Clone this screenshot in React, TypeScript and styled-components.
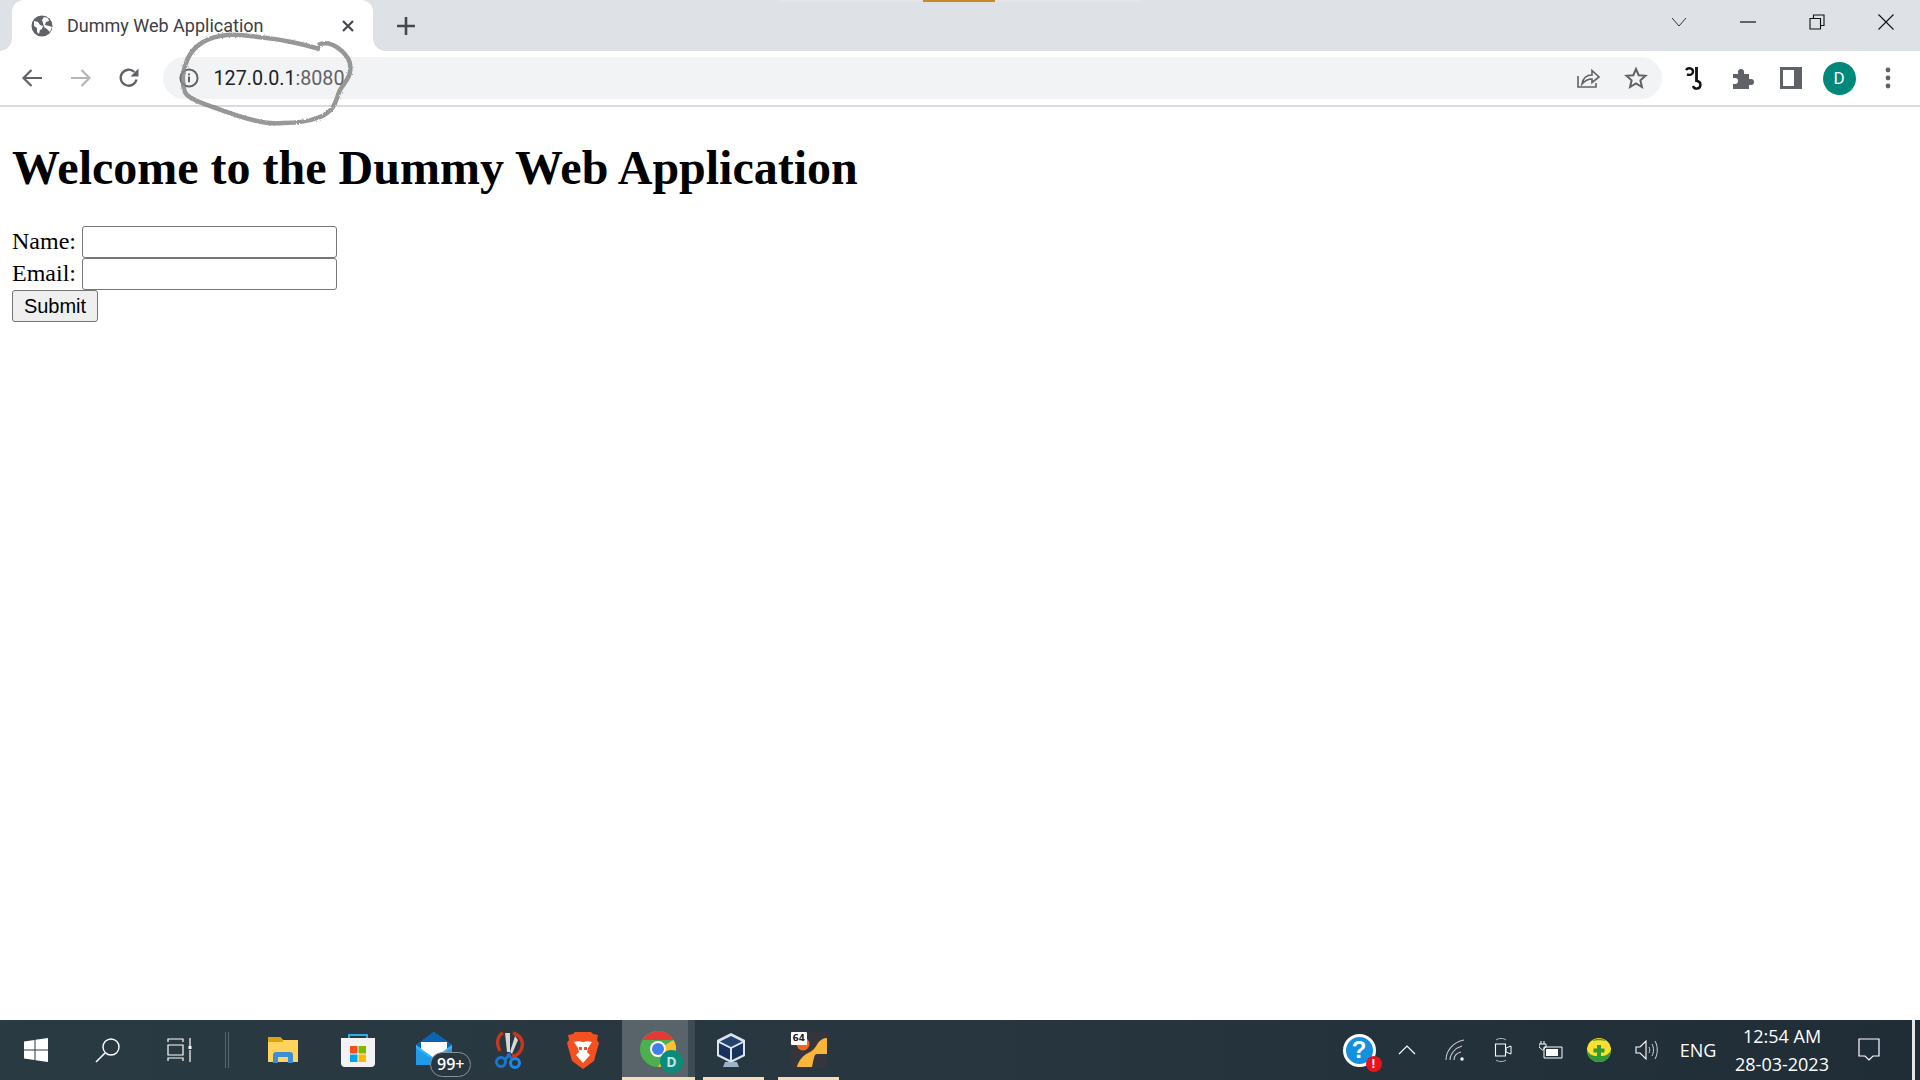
import { FC, ReactNode } from "react";
import styled, { createGlobalStyle } from "styled-components";

const GlobalStyle = createGlobalStyle`
  html, body {
    margin: 0;
    padding: 0;
    height: 100%;
    overflow: hidden;
    background: #fff;
  }
  #root {
    height: 100%;
  }
`;

const ICON_GREY = "#5f6368";

const App: FC = () => {
  return (
    <Screen>
      <GlobalStyle />
      <TabStrip>
        <LoadBar>
          <LoadProgress />
        </LoadBar>
        <Tab>
          <svg width="24" height="24" viewBox="0 0 24 24">
            <circle cx="12" cy="12" r="10.5" fill={ICON_GREY} />
            <path d="M4 7l4 1 2 3 3 1-1 3-2 1-1 4-2-2v-4l-3-2zM14 3l4 1 1 3-3 1-1 3 4 1 3 1-2 5-3-3-3-2-1-4-1-3z" fill="#fff" />
          </svg>
          <TabTitle>Dummy Web Application</TabTitle>
          <svg width="14" height="14" viewBox="0 0 14 14">
            <path d="M2 2l10 10M12 2L2 12" stroke="#45484d" strokeWidth="2.2" />
          </svg>
        </Tab>
        <NewTab>
          <svg width="20" height="20" viewBox="0 0 20 20">
            <path d="M10 1v18M1 10h18" stroke="#45484d" strokeWidth="2.6" />
          </svg>
        </NewTab>
        <StripSpacer />
        <WindowButton $width={69}>
          <svg width="18" height="12" viewBox="0 0 18 12">
            <path d="M2 2l7 8 7-8" stroke="#333" strokeWidth="1" fill="none" />
          </svg>
        </WindowButton>
        <WindowButton $width={69}>
          <svg width="16" height="2" viewBox="0 0 16 2">
            <path d="M0 1h16" stroke="#111" strokeWidth="1.2" />
          </svg>
        </WindowButton>
        <WindowButton $width={69}>
          <svg width="16" height="16" viewBox="0 0 16 16">
            <path d="M1 4.5h10.5V15H1zM4.5 4.5V1H15v10.5h-3.5" stroke="#111" strokeWidth="1.1" fill="none" />
          </svg>
        </WindowButton>
        <WindowButton $width={69}>
          <svg width="16" height="16" viewBox="0 0 16 16">
            <path d="M.5.5l15 15M15.5.5l-15 15" stroke="#111" strokeWidth="1.1" />
          </svg>
        </WindowButton>
      </TabStrip>

      <Toolbar>
        <NavButton>
          <svg width="22" height="20" viewBox="0 0 22 20">
            <path d="M21 10H3M10.5 2L2.5 10l8 8" stroke={ICON_GREY} strokeWidth="2.2" fill="none" />
          </svg>
        </NavButton>
        <NavButton>
          <svg width="22" height="20" viewBox="0 0 22 20">
            <path d="M1 10h18M11.5 2l8 8-8 8" stroke="#b4b6b9" strokeWidth="2.2" fill="none" />
          </svg>
        </NavButton>
        <NavButton>
          <svg width="22" height="22" viewBox="0 0 22 22">
            <path d="M18.5 12.5A8 8 0 1 1 16.3 5" stroke={ICON_GREY} strokeWidth="2.3" fill="none" />
            <path d="M20.5 1.5v8h-8z" fill={ICON_GREY} />
          </svg>
        </NavButton>
        <Omnibox>
          <svg width="20" height="20" viewBox="0 0 20 20">
            <circle cx="10" cy="10" r="8.6" stroke={ICON_GREY} strokeWidth="2" fill="none" />
            <path d="M10 8.6v5.6M10 5.4v1.8" stroke={ICON_GREY} strokeWidth="2" />
          </svg>
          <Url>
            127.0.0.1<UrlPort>:8080</UrlPort>
          </Url>
          <OmniSpacer />
          <OmniIcon>
            <svg width="24" height="22" viewBox="0 0 24 22">
              <path d="M2 9v11h18v-4" stroke={ICON_GREY} strokeWidth="1.6" fill="none" />
              <path d="M6 17c1-6 5-9 10-9V3.5l7 6.5-7 5.5V12c-4 0-7 1.5-10 5z" stroke={ICON_GREY} strokeWidth="1.6" fill="none" />
            </svg>
          </OmniIcon>
          <OmniIcon>
            <svg width="24" height="24" viewBox="0 0 24 24">
              <path d="M12 3l2.7 6.2 6.8.6-5.1 4.5 1.5 6.7L12 17.5 6.100 21l1.500-6.700L2.500 9.800l6.800-.6z" stroke={ICON_GREY} strokeWidth="2" fill="none" />
            </svg>
          </OmniIcon>
        </Omnibox>
        <ToolIcons>
          <ToolIcon>
            <svg width="22" height="24" viewBox="0 0 22 24">
              <path d="M2 4c2-3 7-2 7 1.500 0 3-3 4-6 3" stroke="#111" strokeWidth="2.4" fill="none" />
              <path d="M12.500 1v15" stroke="#111" strokeWidth="2.8" fill="none" />
              <path d="M13 15a3.800 3.800 0 1 1-4 5" stroke="#111" strokeWidth="2.400" fill="none" />
            </svg>
          </ToolIcon>
          <ToolIcon>
            <svg width="22" height="22" viewBox="0 0 22 22">
              <path d="M1 7h5V5a3 3 0 0 1 6 0v2h5v5h2a3 3 0 0 1 0 6h-2v4H1v-5h2a3 3 0 0 0 0-6H1z" fill={ICON_GREY} />
            </svg>
          </ToolIcon>
          <ToolIcon>
            <svg width="22" height="22" viewBox="0 0 22 22">
              <path d="M1.500 1.500h19v19h-19z" stroke={ICON_GREY} strokeWidth="3" fill="#fff" />
              <path d="M14 1h8v20h-8z" fill={ICON_GREY} />
            </svg>
          </ToolIcon>
          <Avatar>D</Avatar>
          <ToolIcon>
            <svg width="6" height="22" viewBox="0 0 6 22">
              <circle cx="3" cy="3" r="2.400" fill={ICON_GREY} />
              <circle cx="3" cy="11" r="2.400" fill={ICON_GREY} />
              <circle cx="3" cy="19" r="2.400" fill={ICON_GREY} />
            </svg>
          </ToolIcon>
        </ToolIcons>
        <Scribble width="180" height="100" viewBox="0 0 180 100">
          <defs>
            <filter id="pencil" x="-10%" y="-10%" width="120%" height="120%">
              <feTurbulence type="fractalNoise" baseFrequency="0.5" numOctaves="2" seed="4" />
              <feDisplacementMap in="SourceGraphic" scale="2.500" />
            </filter>
          </defs>
          <path
            d="M140 18 C 122 13, 105 9, 87 7 C 72 5, 58 3, 47 4 C 36 5, 30 7, 23 11 C 15 16, 11 21, 8 27 C 5 34, 2 42, 3 49 C 3 56, 4 61, 7 64 C 14 70, 24 73, 33 76 C 47 81, 60 86, 73 89 C 84 92, 94 93, 103 92 C 118 92, 130 90, 140 86 C 146 84, 150 80, 153 76 C 157 70, 157 65, 160 59 C 164 52, 169 48, 170 41 C 171 35, 170 30, 167 26 C 163 20, 159 17, 153 14 C 148 12, 142 12, 138 14"
            stroke="#858585"
            strokeWidth="4.500"
            strokeOpacity="0.85"
            fill="none"
            filter="url(#pencil)"
          />
        </Scribble>
      </Toolbar>

      <Page>
        <Heading>Welcome to the Dummy Web Application</Heading>
        <form>
          <FieldRow>
            <FieldLabel>Name:</FieldLabel>
            <TextInput type="text" />
          </FieldRow>
          <FieldRow>
            <FieldLabel>Email:</FieldLabel>
            <TextInput type="text" />
          </FieldRow>
          <SubmitButton type="button">Submit</SubmitButton>
        </form>
      </Page>

      <Taskbar>
        <TaskSlot $width={72}>
          <svg width="24" height="24" viewBox="0 0 24 24">
            <path d="M0 3.500l10.500-1.500v9.500H0zM11.500 1.800L24 0v11.500H11.500zM0 12.500h10.500V22L0 20.500zM11.500 12.500H24V24l-12.500-1.800z" fill="#fff" />
          </svg>
        </TaskSlot>
        <TaskSlot $width={72}>
          <svg width="26" height="26" viewBox="0 0 26 26">
            <circle cx="16" cy="10" r="8" stroke="#fff" strokeWidth="1.400" fill="none" />
            <path d="M10 16L1 25" stroke="#fff" strokeWidth="1.600" />
          </svg>
        </TaskSlot>
        <TaskSlot $width={72}>
          <svg width="26" height="24" viewBox="0 0 26 24">
            <path d="M1 4V1h15v3M1 23v-3h15v3M1 7h15v10H1z" stroke="#fff" strokeWidth="1.200" fill="none" />
            <path d="M23 0v8M23 12v12" stroke="#fff" strokeWidth="1.200" />
            <path d="M21.500 8h3v3h-3z" fill="#fff" />
          </svg>
        </TaskSlot>
        <TaskDivider />
        <TaskSlot $width={72} $left={10}>
          <svg width="32" height="28" viewBox="0 0 32 28">
            <path d="M1 1h12l3 3h15v22H1z" fill="#ffd35c" />
            <path d="M1 1h12l3 3v2H1z" fill="#dba40c" />
            <path d="M6 27v-8a3 3 0 0 1 3-3h14a3 3 0 0 1 3 3v8h-5v-6H11v6z" fill="#3a8ed6" />
          </svg>
        </TaskSlot>
        <TaskSlot $width={72} $left={3}>
          <svg width="36" height="34" viewBox="0 0 36 34">
            <path d="M9 8V2h18v6" stroke="#2ab0e8" strokeWidth="2" fill="none" />
            <path d="M1 5h34v25a4 4 0 0 1-4 4H5a4 4 0 0 1-4-4z" fill="#f3f3f3" />
            <path d="M10 13h7.500v7.500H10z" fill="#f25022" />
            <path d="M18.500 13H26v7.500h-7.500z" fill="#7fba00" />
            <path d="M10 21.500h7.500V29H10z" fill="#00a4ef" />
            <path d="M18.500 21.500H26V29h-7.500z" fill="#ffb900" />
          </svg>
        </TaskSlot>
        <TaskSlot $width={72} $left={13}>
          <MailIcon>
            <svg width="36" height="36" viewBox="0 0 36 36">
              <path d="M0 13L18 0l18 13v20H0z" fill="#1f9bea" />
              <path d="M0 13L18 0l18 13-18 12z" fill="#0a63b5" />
              <path d="M5 10h26v8l-13 8-13-8z" fill="#fff" />
              <path d="M0 13l18 13 18-13v3L18 28 0 16z" fill="#34b4f3" />
            </svg>
            <MailBadge>99+</MailBadge>
          </MailIcon>
        </TaskSlot>
        <TaskSlot $width={58} $left={1}>
          <svg width="30" height="38" viewBox="0 0 30 38">
            <path d="M9 2C3 5 2 13 6 20M19 2c10 3 12 13 6 20-2 2-5 3-7 3" stroke="#c8361d" strokeWidth="3.400" fill="none" />
            <path d="M11 2h5v19h-3zM21 5l-5 16 2 2 6-14z" fill="#d6d6d6" />
            <circle cx="7" cy="31" r="4.500" stroke="#1976d2" strokeWidth="3" fill="none" />
            <circle cx="21" cy="32" r="4.500" stroke="#1e88e5" strokeWidth="3" fill="none" />
            <path d="M10 28l4-6 2 0 3 6-2 1-2-3-2 3z" fill="#1976d2" />
          </svg>
        </TaskSlot>
        <TaskSlot $width={72} $left={9}>
          <svg width="32" height="38" viewBox="0 0 32 38">
            <path d="M8 1h16l2 2 5 1-1 5 2 3-5 18-11 8-11-8L0 12l2-3-1-5 5-1z" fill="#f5501f" />
            <path d="M7 11c3-1 5-1 9 0 4-1 6-1 9 0l-4 6-1 4 3 3-7 8-7-8 3-3-1-4z" fill="#fff" />
            <path d="M12 16h3v3h-3zM17 16h3v3h-3z" fill="#f5501f" />
          </svg>
        </TaskSlot>
        <ActiveTaskSlot $left={3}>
          <ActivePane>
            <ChromeLogo>
              <svg width="36" height="36" viewBox="0 0 36 36">
                <circle cx="18" cy="18" r="18" fill="#4caf50" />
                <path d="M18 0a18 18 0 0 1 15.600 9L18 9 3 9A18 18 0 0 1 18 0z" fill="#e53935" />
                <path d="M33.600 9A18 18 0 0 1 18 36l8-14-1-8z" fill="#fbc02d" />
                <circle cx="18" cy="18" r="8" fill="#fff" />
                <circle cx="18" cy="18" r="6" fill="#3f7fe6" />
              </svg>
              <ChromeBadge>D</ChromeBadge>
            </ChromeLogo>
          </ActivePane>
          <ActiveEdge />
        </ActiveTaskSlot>
        <TaskSlot $width={61} $left={8} $running>
          <VBoxMark>
            <svg width="30" height="36" viewBox="0 0 30 36">
              <path d="M15 1l14 7v16l-14 7-14-7V8z" fill="#dbe4ee" />
              <path d="M15 4L4 9.500 15 15l11-5.500z" fill="#24446f" />
              <path d="M3 11l11 5.500V28L3 22.500zM27 11l-11 5.500V28l11-5.500z" fill="#17335c" />
              <path d="M9 30h12l2 5H7z" fill="#9db1c9" />
            </svg>
          </VBoxMark>
        </TaskSlot>
        <TaskSlot $width={61} $left={14} $running>
          <GameIcon>
            <svg width="36" height="36" viewBox="0 0 36 36">
              <rect width="36" height="36" rx="3" fill="#34363c" />
              <circle cx="12" cy="12" r="6.500" fill="#f5681c" />
              <path d="M36 6v16H26c-3 0-3 5-4 8l-1 5H6c1-5 5-11 11-14 5-2 7-5 10-10 2-3 5-5 9-5z" fill="#f9b53b" />
            </svg>
            <GameBadge>64</GameBadge>
          </GameIcon>
        </TaskSlot>
        <TaskSpacer />
        <TraySlot $width={48}>
          <HelpIcon>
            ?<HelpAlert>!</HelpAlert>
          </HelpIcon>
        </TraySlot>
        <TraySlot $width={48}>
          <svg width="18" height="12" viewBox="0 0 18 12">
            <path d="M1 10l8-8 8 8" stroke="#fff" strokeWidth="1.200" fill="none" />
          </svg>
        </TraySlot>
        <TraySlot $width={48}>
          <svg width="20" height="22" viewBox="0 0 20 22">
            <path d="M1 21C1 12 8 3 19 1M5 21c0-6 5-12 12-14M9 21c0-4 3-7 7-8" stroke="#c4c9cc" strokeWidth="1.100" fill="none" />
            <circle cx="17" cy="20" r="1.700" fill="#fff" />
          </svg>
        </TraySlot>
        <TraySlot $width={48}>
          <svg width="18" height="26" viewBox="0 0 18 26">
            <path d="M1.500 7h10v12h-10z" stroke="#fff" strokeWidth="1.100" fill="none" />
            <path d="M12 11l5-2v8l-5-2z" stroke="#fff" strokeWidth="1" fill="none" />
            <path d="M2 3c2-2 8-2 10 0M2 23c2 2 8 2 10 0" stroke="#b8bdc0" strokeWidth="1" fill="none" />
          </svg>
        </TraySlot>
        <TraySlot $width={48}>
          <svg width="24" height="18" viewBox="0 0 24 18">
            <path d="M5 6h18v11H5z" stroke="#fff" strokeWidth="1" fill="none" />
            <path d="M7 8h12v7H7z" fill="#fff" />
            <path d="M2 0v3M5 0v3M0 3h7v3L3.500 9 0 6z" stroke="#fff" strokeWidth="1" fill="none" />
          </svg>
        </TraySlot>
        <TraySlot $width={48}>
          <svg width="24" height="24" viewBox="0 0 24 24">
            <circle cx="12" cy="12" r="12" fill="#ffdf2d" />
            <path d="M0 12a12 12 0 0 0 24 0c-3 6-7 6-12 6S3 18 0 12zM5 3c4-3 10-3 14 0-4-1-10-1-14 0z" fill="#2f9b38" />
            <path d="M10 7h4v3.500h3.500v4H14V18h-4v-3.500H6.500v-4H10z" fill="#2f9b38" />
          </svg>
        </TraySlot>
        <TraySlot $width={48}>
          <svg width="24" height="22" viewBox="0 0 24 22">
            <path d="M1 8h4l6-6v18l-6-6H1z" stroke="#fff" strokeWidth="1.100" fill="none" />
            <path d="M14 8c1 2 1 4 0 6M17 5c2 4 2 8 0 12M20 2c3 5 3 13 0 18" stroke="#d0d4d6" strokeWidth="1" fill="none" />
          </svg>
        </TraySlot>
        <TraySlot $width={48} $left={3}>
          <TrayText>ENG</TrayText>
        </TraySlot>
        <Clock>
          <TrayText>12:54 AM</TrayText>
          <TrayText>28-03-2023</TrayText>
        </Clock>
        <TraySlot $width={64} $left={1}>
          <svg width="22" height="24" viewBox="0 0 22 24">
            <path d="M1 1h20v17h-6l-4 4-4-4H1z" stroke="#fff" strokeWidth="1.200" fill="none" />
          </svg>
        </TraySlot>
        <DesktopEdge />
      </Taskbar>
    </Screen>
  );
};

export default App;

const NavButton: FC<{ children: ReactNode }> = ({ children }) => (
  <NavSlot>{children}</NavSlot>
);

const Screen = styled.div`
  display: flex;
  flex-direction: column;
  width: 1920px;
  height: 1080px;
  overflow: hidden;
  background: #fff;
`;

const TabStrip = styled.div`
  position: relative;
  display: flex;
  align-items: stretch;
  flex: 0 0 51px;
  padding-left: 12px;
  background: #dee1e6;
`;

const LoadBar = styled.div`
  position: absolute;
  top: 0;
  left: 779px;
  width: 362px;
  height: 2px;
  background: #e6e6e6;
`;

const LoadProgress = styled.div`
  width: 72px;
  height: 2px;
  margin-left: 144px;
  background: #c8872a;
`;

const Tab = styled.div`
  position: relative;
  display: flex;
  align-items: center;
  gap: 13px;
  width: 361px;
  box-sizing: border-box;
  padding: 0 18px 0 18px;
  background: #fff;
  border-radius: 12px 12px 0 0;
  font-family: Roboto, "Liberation Sans", sans-serif;

  &::before,
  &::after {
    content: "";
    position: absolute;
    bottom: 0;
    width: 12px;
    height: 12px;
  }
  &::before {
    left: -12px;
    background: radial-gradient(circle at 0 0, transparent 11.5px, #fff 12px);
  }
  &::after {
    right: -12px;
    background: radial-gradient(circle at 100% 0, transparent 11.5px, #fff 12px);
  }
`;

const TabTitle = styled.span`
  flex: 1;
  font-size: 18px;
  color: #3c4043;
  white-space: nowrap;
`;

const NewTab = styled.div`
  display: flex;
  align-items: center;
  justify-content: center;
  width: 65px;
`;

const StripSpacer = styled.div`
  flex: 1;
`;

const WindowButton = styled.div<{ $width: number }>`
  display: flex;
  align-items: center;
  justify-content: center;
  width: ${(p) => p.$width}px;
  height: 43px;
`;

const Toolbar = styled.div`
  position: relative;
  display: flex;
  align-items: center;
  flex: 0 0 56px;
  box-sizing: border-box;
  padding: 0 0 0 8px;
  background: #fff;
  border-bottom: 2px solid #dadce0;
`;

const NavSlot = styled.div`
  display: flex;
  align-items: center;
  justify-content: center;
  width: 48.500px;
`;

const Omnibox = styled.div`
  display: flex;
  align-items: center;
  flex: 0 0 1499px;
  height: 42px;
  box-sizing: border-box;
  margin-left: 9px;
  padding: 0 2px 0 16px;
  background: #f1f3f4;
  border-radius: 21px;
`;

const Url = styled.span`
  margin-left: 15px;
  font: 19.700px Roboto, "Liberation Sans", sans-serif;
  color: #202124;
`;

const UrlPort = styled.span`
  color: #5f6368;
`;

const OmniSpacer = styled.div`
  flex: 1;
`;

const OmniIcon = styled.div`
  display: flex;
  align-items: center;
  justify-content: center;
  width: 48px;
`;

const ToolIcons = styled.div`
  display: flex;
  align-items: center;
  margin-left: 9px;
`;

const ToolIcon = styled.div`
  display: flex;
  align-items: center;
  justify-content: center;
  width: 48px;
`;

const Avatar = styled.div`
  display: flex;
  align-items: center;
  justify-content: center;
  width: 33px;
  height: 33px;
  margin: 0 8px;
  border-radius: 50%;
  background: #00897b;
  color: #fff;
  font: 17px Roboto, "Liberation Sans", sans-serif;
`;

const Scribble = styled.svg`
  position: absolute;
  top: -20px;
  left: 180px;
  overflow: visible;
  pointer-events: none;
`;

const Page = styled.main`
  flex: 1;
  padding: 0 12px;
  background: #fff;
  font: 24px/32px "Liberation Serif", "Times New Roman", serif;
  color: #000;
`;

const Heading = styled.h1`
  margin: 33px 0 31px;
  font: bold 48px/55px "Liberation Serif", "Times New Roman", serif;
`;

const FieldRow = styled.div`
  display: flex;
  align-items: center;
  gap: 6px;
  height: 32px;
`;

const FieldLabel = styled.label`
  margin-top: -2px;
`;

const TextInput = styled.input`
  width: 255px;
  height: 32px;
  box-sizing: border-box;
  padding: 0 3px;
  background: #fff;
  border: 1px solid #767676;
  border-radius: 3px;
`;

const SubmitButton = styled.button`
  display: block;
  width: 86px;
  height: 32px;
  padding: 0;
  background: #efefef;
  border: 1px solid #767676;
  border-radius: 3px;
  font: 20px "Liberation Sans", Arial, sans-serif;
  color: #000;
`;

const Taskbar = styled.footer`
  display: flex;
  align-items: stretch;
  flex: 0 0 60px;
  background: linear-gradient(90deg, #2a3a42 0%, #27363f 50%, #202d37 100%);
  font-family: "Open Sans", "Liberation Sans", sans-serif;
`;

const TaskSlot = styled.div<{ $width: number; $left?: number; $running?: boolean }>`
  display: flex;
  align-items: center;
  justify-content: center;
  flex: 0 0 ${(p) => p.$width}px;
  margin-left: ${(p) => p.$left ?? 0}px;
  box-sizing: border-box;
  border-bottom: 3px solid ${(p) => (p.$running ? "#f7dcb9" : "transparent")};
  border-top: 3px solid transparent;
`;

const TaskDivider = styled.div`
  flex: 0 0 4px;
  height: 36px;
  align-self: center;
  margin: 0 8px 0 9px;
  box-sizing: border-box;
  border-left: 1px solid #55636b;
  border-right: 1px solid #55636b;
`;

const MailIcon = styled.div`
  position: relative;
  width: 36px;
  height: 36px;
  margin-right: 18px;
`;

const MailBadge = styled.span`
  position: absolute;
  left: 14px;
  bottom: -9px;
  padding: 1px 6px;
  background: #27363f;
  border: 1px solid #8a9298;
  border-radius: 13px;
  font-size: 16px;
  line-height: 21px;
  font-weight: 600;
  color: #fff;
`;

const VBoxMark = styled.div`
  display: flex;
  margin-right: 5px;
`;

const ActiveTaskSlot = styled.div<{ $left: number }>`
  display: flex;
  flex: 0 0 73px;
  margin-left: ${(p) => p.$left}px;
  box-sizing: border-box;
  border-bottom: 3px solid #f7dcb9;
`;

const ActivePane = styled.div`
  display: flex;
  align-items: center;
  justify-content: center;
  flex: 1;
  background: #586469;
`;

const ActiveEdge = styled.div`
  flex: 0 0 7px;
  background: #3d4b53;
`;

const ChromeLogo = styled.div`
  position: relative;
  width: 36px;
  height: 36px;
  margin-left: 6px;
`;

const ChromeBadge = styled.span`
  position: absolute;
  right: -7px;
  bottom: -6px;
  display: flex;
  align-items: center;
  justify-content: center;
  width: 23px;
  height: 23px;
  background: #0a8b7b;
  border-radius: 50%;
  font-size: 14px;
  font-weight: 700;
  color: #c4e4df;
`;

const GameIcon = styled.div`
  position: relative;
  width: 36px;
  height: 36px;
`;

const GameBadge = styled.span`
  position: absolute;
  top: 0;
  left: 0;
  padding: 0 2px;
  background: #fff;
  border-radius: 1px;
  font: bold 9px/13px "DejaVu Sans", sans-serif;
  color: #222;
`;

const TaskSpacer = styled.div`
  flex: 1;
`;

const TraySlot = styled.div<{ $width: number; $left?: number }>`
  display: flex;
  align-items: center;
  justify-content: center;
  flex: 0 0 ${(p) => p.$width}px;
  margin-left: ${(p) => p.$left ?? 0}px;
`;

const HelpIcon = styled.div`
  position: relative;
  display: flex;
  align-items: center;
  justify-content: center;
  box-sizing: border-box;
  width: 33px;
  height: 33px;
  background: #1391de;
  border: 3px solid #fff;
  border-radius: 50%;
  font: bold 24px/1 "Liberation Sans", sans-serif;
  color: #fff;
`;

const HelpAlert = styled.span`
  position: absolute;
  right: -9px;
  bottom: -8px;
  display: flex;
  align-items: center;
  justify-content: center;
  width: 16px;
  height: 16px;
  background: #e8141c;
  border-radius: 50%;
  font-size: 13px;
`;

const TrayText = styled.span`
  font-size: 18px;
  line-height: 28px;
  color: #fff;
  white-space: nowrap;
`;

const Clock = styled.div`
  display: flex;
  flex-direction: column;
  align-items: center;
  justify-content: center;
  flex: 0 0 108px;
  margin-left: 6px;
`;

const DesktopEdge = styled.div`
  flex: 0 0 3px;
  margin: 0 5px 0 11px;
  background: #e6e6e6;
`;
